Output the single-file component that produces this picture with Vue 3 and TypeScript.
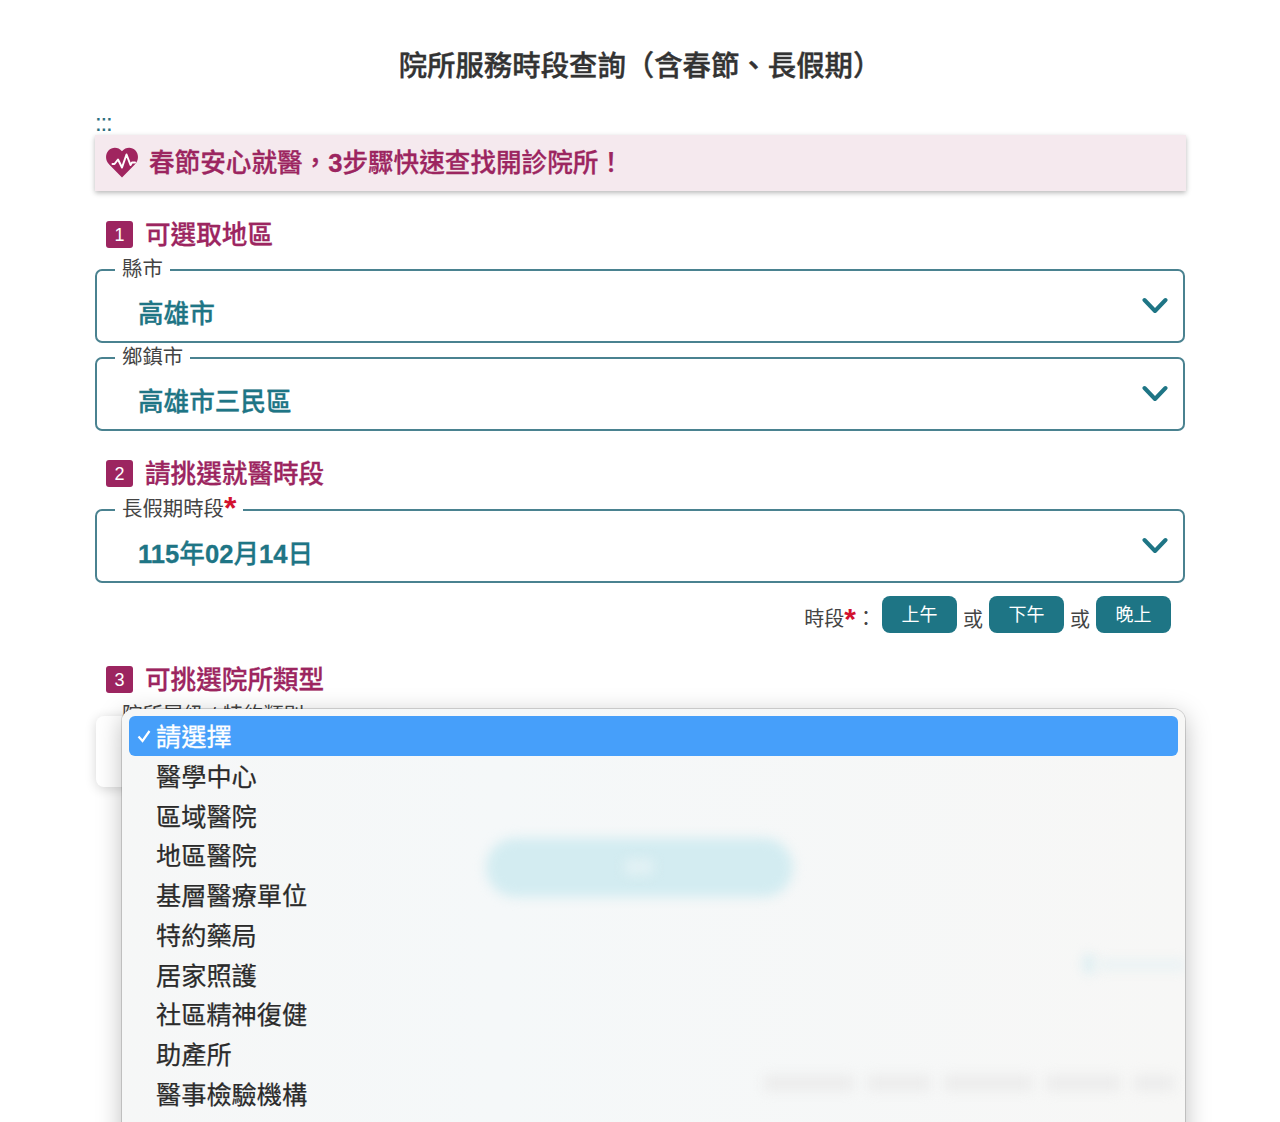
<script setup lang="ts">
const options: string[] = [
  '請選擇', '醫學中心', '區域醫院', '地區醫院', '基層醫療單位',
  '特約藥局', '居家照護', '社區精神復健', '助產所', '醫事檢驗機構',
]
const periods: string[] = ['上午', '下午', '晚上']
const noteBlocks: number[] = [90, 62, 88, 74, 40]
</script>

<template>
  <div class="page">
    <main class="wrap">
      <h1 class="title">院所服務時段查詢（含春節、長假期）</h1>
      <div class="dots">:::</div>
      <div class="banner">
        <svg class="heart" viewBox="0 0 32 31" aria-hidden="true">
          <path d="M16 30.500 3.200 17.600C-1 13.400-.8 7 2.500 3.500 6.200-.3 12.200-.3 16 4.300c3.800-4.600 9.800-4.600 13.500-.8 3.300 3.500 3.500 9.900-.7 14.100z" fill="#a0255f" />
          <path d="M6.500 17H8.500L12 12.500 16 20.500 20.500 7.500 24.500 18 26 15.500H29" fill="none" stroke="#fff" stroke-width="2" stroke-linejoin="round" stroke-linecap="round" />
        </svg>
        <span class="banner-text">春節安心就醫，<b>3</b>步驟快速查找開診院所！</span>
      </div>

      <h2 class="step step-one"><span class="num">1</span><span class="step-text">可選取地區</span></h2>
      <fieldset class="field">
        <legend>縣市</legend>
        <span class="value">高雄市</span>
        <svg class="chev" viewBox="0 0 26 18" aria-hidden="true"><path d="M2.500 3 13 14 23.500 3" /></svg>
      </fieldset>
      <fieldset class="field">
        <legend>鄉鎮市</legend>
        <span class="value">高雄市三民區</span>
        <svg class="chev" viewBox="0 0 26 18" aria-hidden="true"><path d="M2.500 3 13 14 23.500 3" /></svg>
      </fieldset>

      <h2 class="step step-two"><span class="num">2</span><span class="step-text">請挑選就醫時段</span></h2>
      <fieldset class="field">
        <legend>長假期時段<span class="req">*</span></legend>
        <span class="value"><b>115</b>年<b>02</b>月<b>14</b>日</span>
        <svg class="chev" viewBox="0 0 26 18" aria-hidden="true"><path d="M2.500 3 13 14 23.500 3" /></svg>
      </fieldset>

      <div class="periods">
        <span class="plabel">時段<span class="req">*</span>：</span>
        <template v-for="(p, i) in periods" :key="p">
          <span v-if="i > 0" class="or">或</span>
          <button class="pbtn" type="button">{{ p }}</button>
        </template>
      </div>

      <h2 class="step step-three"><span class="num">3</span><span class="step-text">可挑選院所類型</span></h2>
      <div class="type-label">院所層級 / 特約類別</div>
      <div class="type-box"></div>
    </main>

    <div class="popup">
      <div class="ghost ghost-btn"></div>
      <div class="ghost ghost-btn-text"></div>
      <div class="ghost ghost-dot"></div>
      <div class="ghost ghost-link"></div>
      <div class="ghost-note">
        <i v-for="(w, i) in noteBlocks" :key="i" class="ghost-seg" :style="{ width: w + 'px' }"></i>
      </div>
      <ul class="list">
        <li v-for="(o, i) in options" :key="o" class="opt" :class="{ sel: i === 0 }">
          <svg v-if="i === 0" class="tick" viewBox="0 0 14 14" aria-hidden="true"><path d="M1.500 7.500 5.500 12 12.500 2" /></svg>
          <span class="opt-text">{{ o }}</span>
        </li>
      </ul>
    </div>
  </div>
</template>

<style>
html, body { margin: 0; background: #fff; }
</style>

<style scoped>
.page {
  position: relative;
  width: 1280px;
  height: 1122px;
  overflow: hidden;
  background: #fff;
  font-family: "Liberation Sans", "Noto Sans CJK TC", sans-serif;
  color: #333;
}
.wrap { width: 1090px; margin: 0 0 0 95px; }
.title {
  margin: 0;
  padding-top: 46px;
  height: 39px;
  line-height: 40px;
  font-size: 28.4px;
  font-weight: 500;
  -webkit-text-stroke: .4px #333;
  text-align: center;
  color: #333;
}
.dots {
  margin-top: 28px;
  height: 20px;
  line-height: 20px;
  font-size: 24px;
  color: #2c6f80;
  letter-spacing: -1.2px;
}
.banner {
  display: flex;
  align-items: center;
  gap: 12px;
  width: 1091px;
  height: 56px;
  margin-top: 2px;
  padding-left: 11px;
  box-sizing: border-box;
  background: #f5e9ee;
  box-shadow: 0 2px 5px rgba(0, 0, 0, .28);
  color: #9c2560;
  font-size: 25.6px;
  font-weight: 500;
  -webkit-text-stroke: .3px #9c2560;
}
.banner-text { margin-top: -5px; margin-left: -1px; }
.heart { width: 32px; height: 31px; flex: none; margin-top: -1px; }
.step {
  display: flex;
  align-items: center;
  height: 28px;
  margin: 0 0 7px;
  padding-left: 11px;
  color: #9c2560;
  font-size: 25.6px;
  font-weight: 500;
  -webkit-text-stroke: .3px #9c2560;
}
.step-text { margin-top: -3px; }
.step-one { margin-top: 29px; }
.step-two { margin-top: 28px; margin-bottom: 8px; }
.step-three { margin-top: 32px; margin-bottom: 5px; }
.num {
  width: 27px;
  height: 27px;
  margin-right: 12px;
  border-radius: 3px;
  background: #9c2560;
  color: #fff;
  -webkit-text-stroke: 0;
  font-size: 18px;
  font-weight: 400;
  line-height: 28px;
  text-align: center;
}
.field {
  display: flex;
  align-items: flex-start;
  justify-content: space-between;
  height: 88px;
  box-sizing: border-box;
  margin: 0;
  padding: 0 15px 0 41px;
  border: 2px solid #4a8290;
  border-radius: 7px;
  min-inline-size: 0;
}
.field legend {
  margin-left: -23px;
  padding: 0 7px;
  height: 30px;
  line-height: 28px;
  font-size: 20.4px;
  color: #444;
  white-space: nowrap;
}
.req {
  color: #d3122f;
  font-weight: 700;
  font-size: 32px;
  line-height: 20px;
  vertical-align: -3px;
}
.value {
  margin-top: 13px;
  line-height: 32px;
  font-size: 25.6px;
  font-weight: 500;
  color: #1e7585;
  -webkit-text-stroke: .3px #1e7585;
}
.chev { width: 26px; height: 18px; margin-top: 12px; flex: none; }
.chev path { fill: none; stroke: #1e7585; stroke-width: 4; stroke-linecap: round; stroke-linejoin: round; }
.periods {
  display: flex;
  align-items: center;
  justify-content: flex-end;
  height: 37px;
  margin-top: 13px;
  padding-right: 14px;
  font-size: 20px;
  color: #444;
}
.plabel { margin-right: 6px; padding-top: 6px; }
.plabel .req { font-size: 30px; }
.or { width: 32px; text-align: center; padding-top: 7px; }
.pbtn {
  width: 75px;
  height: 37px;
  padding: 0 0 3px;
  border: 0;
  border-radius: 8px;
  background: #1e7585;
  color: #fff;
  font-family: inherit;
  font-size: 18px;
}
.type-label {
  box-sizing: border-box;
  height: 31px;
  line-height: 28px;
  margin: 0 0 -13px 27px;
  padding-top: 3px;
  font-size: 20.4px;
  word-spacing: 1px;
  color: #444;
}
.type-box {
  width: 300px;
  height: 71px;
  margin-left: 1px;
  border-radius: 8px;
  background: #fff;
  box-shadow: 0 2px 12px rgba(0, 0, 0, .16);
}
.popup {
  position: absolute;
  left: 122px;
  top: 709px;
  width: 1063px;
  height: 520px;
  overflow: hidden;
  border-radius: 12px;
  background: linear-gradient(90deg, #f6f7f7 0%, #f5f8f9 35%, #f7f7f6 100%);
  box-shadow: 0 0 0 1px rgba(0, 0, 0, .14), 0 6px 26px rgba(0, 0, 0, .26);
}
.ghost { position: absolute; filter: blur(6px); }
.ghost-btn { left: 364px; top: 129px; width: 307px; height: 59px; border-radius: 30px; background: #d3ecf1; }
.ghost-btn-text { left: 503px; top: 150px; width: 28px; height: 16px; background: #e2f1f4; }
.ghost-dot { left: 961px; top: 245px; width: 12px; height: 20px; border-radius: 6px; background: #dceef2; }
.ghost-link { left: 975px; top: 251px; width: 90px; height: 10px; border-radius: 5px; background: #e9f2f4; }
.ghost-note {
  position: absolute;
  left: 642px;
  top: 366px;
  display: flex;
  gap: 14px;
  filter: blur(6px);
}
.ghost-seg { display: block; height: 16px; background: #ececec; }
.list {
  position: relative;
  margin: 0;
  padding: 7px;
  list-style: none;
}
.opt {
  position: relative;
  height: 39.750px;
  padding-left: 27px;
  line-height: 42px;
  font-size: 25.2px;
  -webkit-text-stroke: .25px #2b2b2b;
  color: #2b2b2b;
  border-radius: 6px;
  box-sizing: border-box;
}
.opt.sel { background: #469ffa; color: #fff; -webkit-text-stroke: .3px #fff; }
.tick {
  position: absolute;
  left: 8px;
  top: 13px;
  width: 14px;
  height: 14px;
}
.tick path { fill: none; stroke: #fff; stroke-width: 2.2; }
</style>
